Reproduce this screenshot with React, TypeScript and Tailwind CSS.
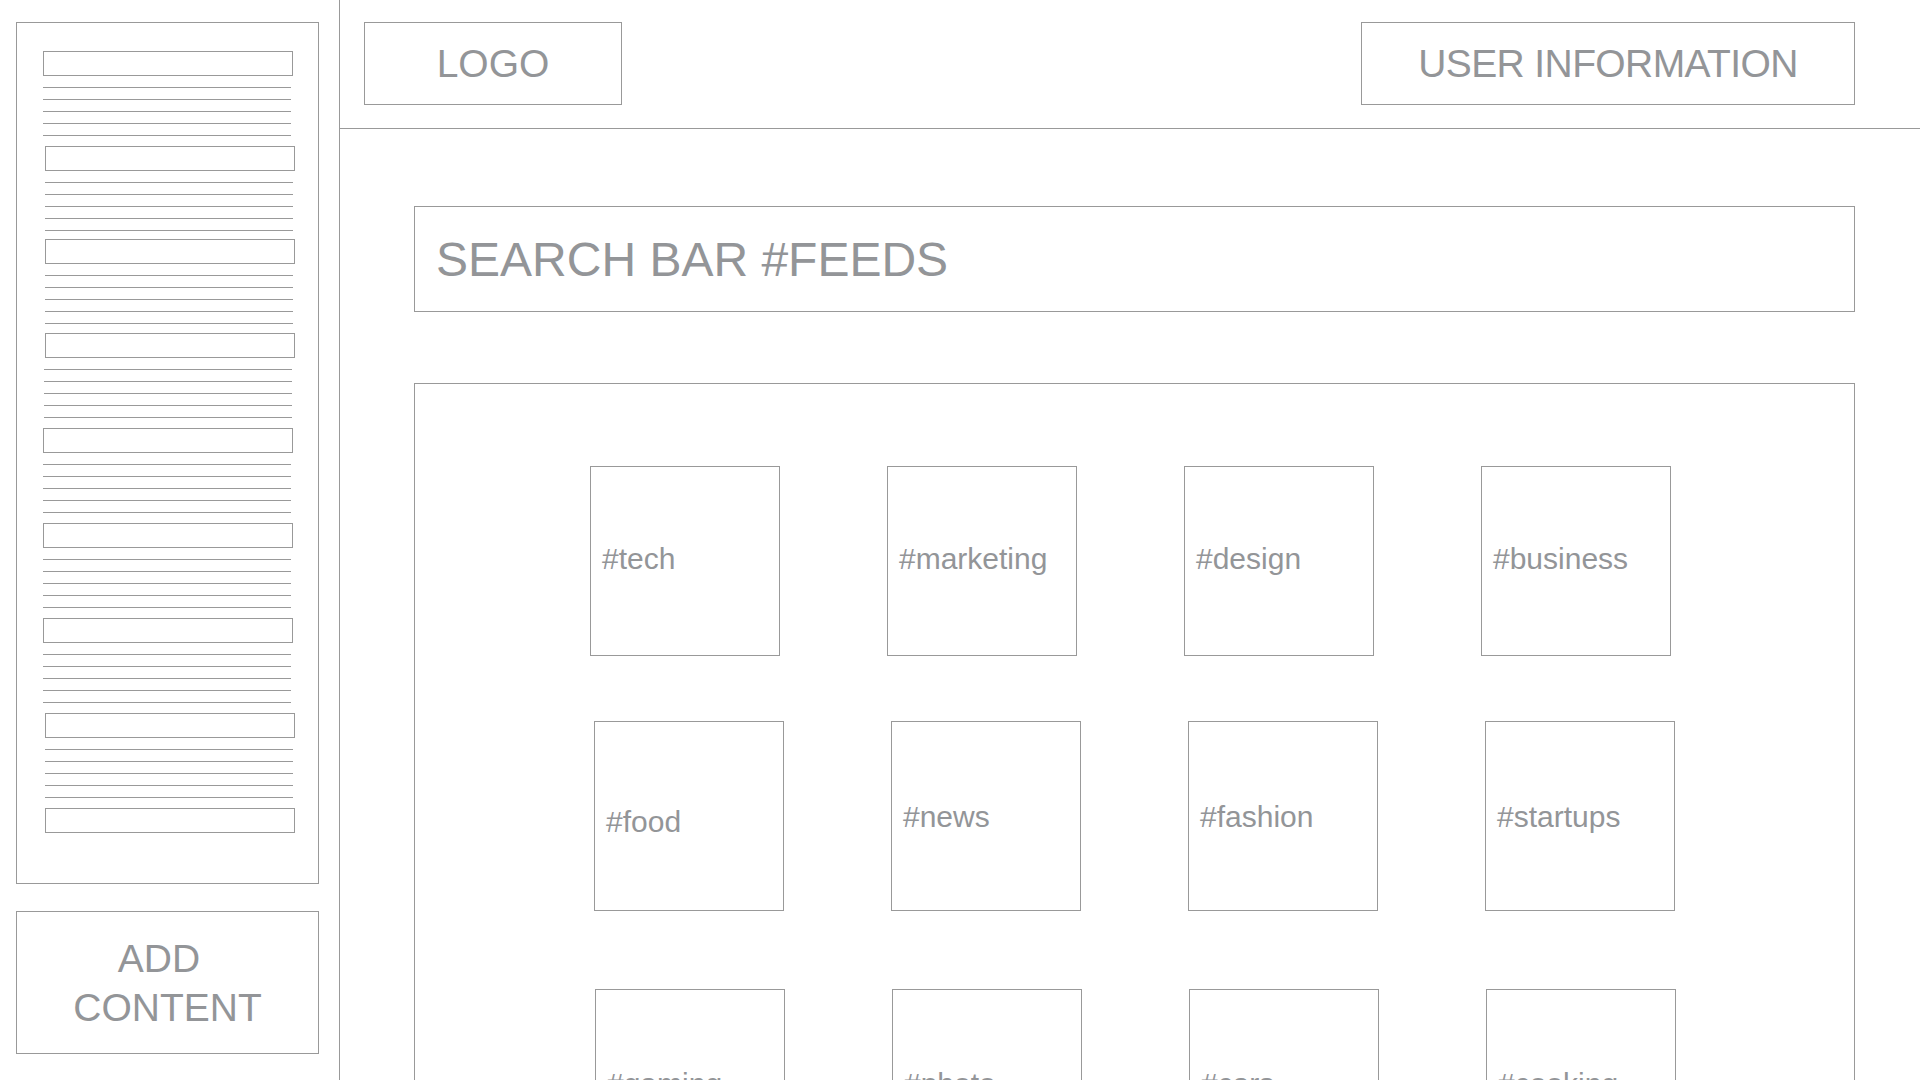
import React from 'react';

const font = { fontFamily: '"Liberation Sans", Arial, Helvetica, sans-serif' };

// sidebar list groups: left offset of rect / lines inside the box, and group height
const groups = [
  { rect: 26, lines: 26, h: 95 },
  { rect: 28, lines: 28, h: 93 },
  { rect: 28, lines: 28, h: 94 },
  { rect: 28, lines: 27, h: 95 },
  { rect: 26, lines: 26, h: 95 },
  { rect: 26, lines: 26, h: 95 },
  { rect: 26, lines: 26, h: 95 },
  { rect: 28, lines: 28, h: 95 },
];

// offset = extra top margin of the label, to follow the sketch's small misalignments
const rows = [
  { ml: 'ml-[175px]', mt: 'mt-[82px]', tags: ['#tech', '#marketing', '#design', '#business'], offset: [-5, -5, -5, -5] },
  { ml: 'ml-[179px]', mt: 'mt-[65px]', tags: ['#food', '#news', '#fashion', '#startups'], offset: [12, 2, 2, 2] },
  { ml: 'ml-[180px]', mt: 'mt-[78px]', tags: ['#gaming', '#photo', '#cars', '#cooking'], offset: [0, 0, 0, 0] },
];

const SidebarGroup = ({ rect, lines, h }: { rect: number; lines: number; h: number }) => (
  <div className="flex flex-col shrink-0" style={{ height: h }}>
    <div className="h-[25px] w-[250px] border border-[#999999]" style={{ marginLeft: rect }} />
    {[0, 1, 2, 3, 4].map((i) => (
      <div key={i} className="mt-[11px] h-px w-[248px] bg-[#999999]" style={{ marginLeft: lines }} />
    ))}
  </div>
);

const Tile = ({ label, offset }: { label: string; offset: number }) => (
  <div className="w-[190px] h-[190px] shrink-0 border border-[#999999] flex items-center pl-[11px]">
    <span className="text-[30px] leading-none text-[#939598]" style={{ marginTop: offset }}>
      {label}
    </span>
  </div>
);

export default function App() {
  return (
    <div className="flex w-[1920px] h-[1080px] overflow-hidden bg-white" style={font}>
      {/* Sidebar */}
      <aside className="w-[340px] shrink-0 border-r border-[#999999] pl-[16px] pt-[22px]">
        <div className="w-[303px] h-[862px] border border-[#999999] pt-[28px] flex flex-col">
          {groups.map((g, i) => (
            <SidebarGroup key={i} {...g} />
          ))}
          <div className="h-[25px] w-[250px] border border-[#999999] ml-[28px]" />
        </div>
        <div className="mt-[27px] w-[303px] h-[143px] border border-[#999999] flex flex-col items-center justify-center text-[39px] leading-[49px] text-[#939598]">
          <span className="pr-[17px]">ADD</span>
          <span>CONTENT</span>
        </div>
      </aside>

      {/* Main */}
      <main className="flex-1 flex flex-col min-w-0">
        <header className="h-[129px] shrink-0 border-b border-[#999999] flex items-start justify-between pt-[22px] pl-[24px] pr-[65px]">
          <div className="w-[258px] h-[83px] border border-[#999999] flex items-center justify-center text-[39px] leading-none text-[#939598]">
            LOGO
          </div>
          <div className="w-[494px] h-[83px] border border-[#999999] flex items-center justify-center text-[39px] leading-none tracking-[-0.6px] text-[#939598]">
            USER INFORMATION
          </div>
        </header>

        <div className="ml-[74px] mt-[77px] w-[1441px] h-[106px] shrink-0 border border-[#999999] flex items-center pl-[21px] text-[48px] leading-none text-[#939598]">
          <span className="mt-[2px]">SEARCH BAR #FEEDS</span>
        </div>

        <section className="ml-[74px] mt-[71px] w-[1441px] h-[900px] shrink-0 border border-[#999999] flex flex-col">
          {rows.map((r, i) => (
            <div key={i} className={`flex gap-[107px] ${r.ml} ${r.mt}`}>
              {r.tags.map((t, j) => (
                <Tile key={t} label={t} offset={r.offset[j]} />
              ))}
            </div>
          ))}
        </section>
      </main>
    </div>
  );
}
